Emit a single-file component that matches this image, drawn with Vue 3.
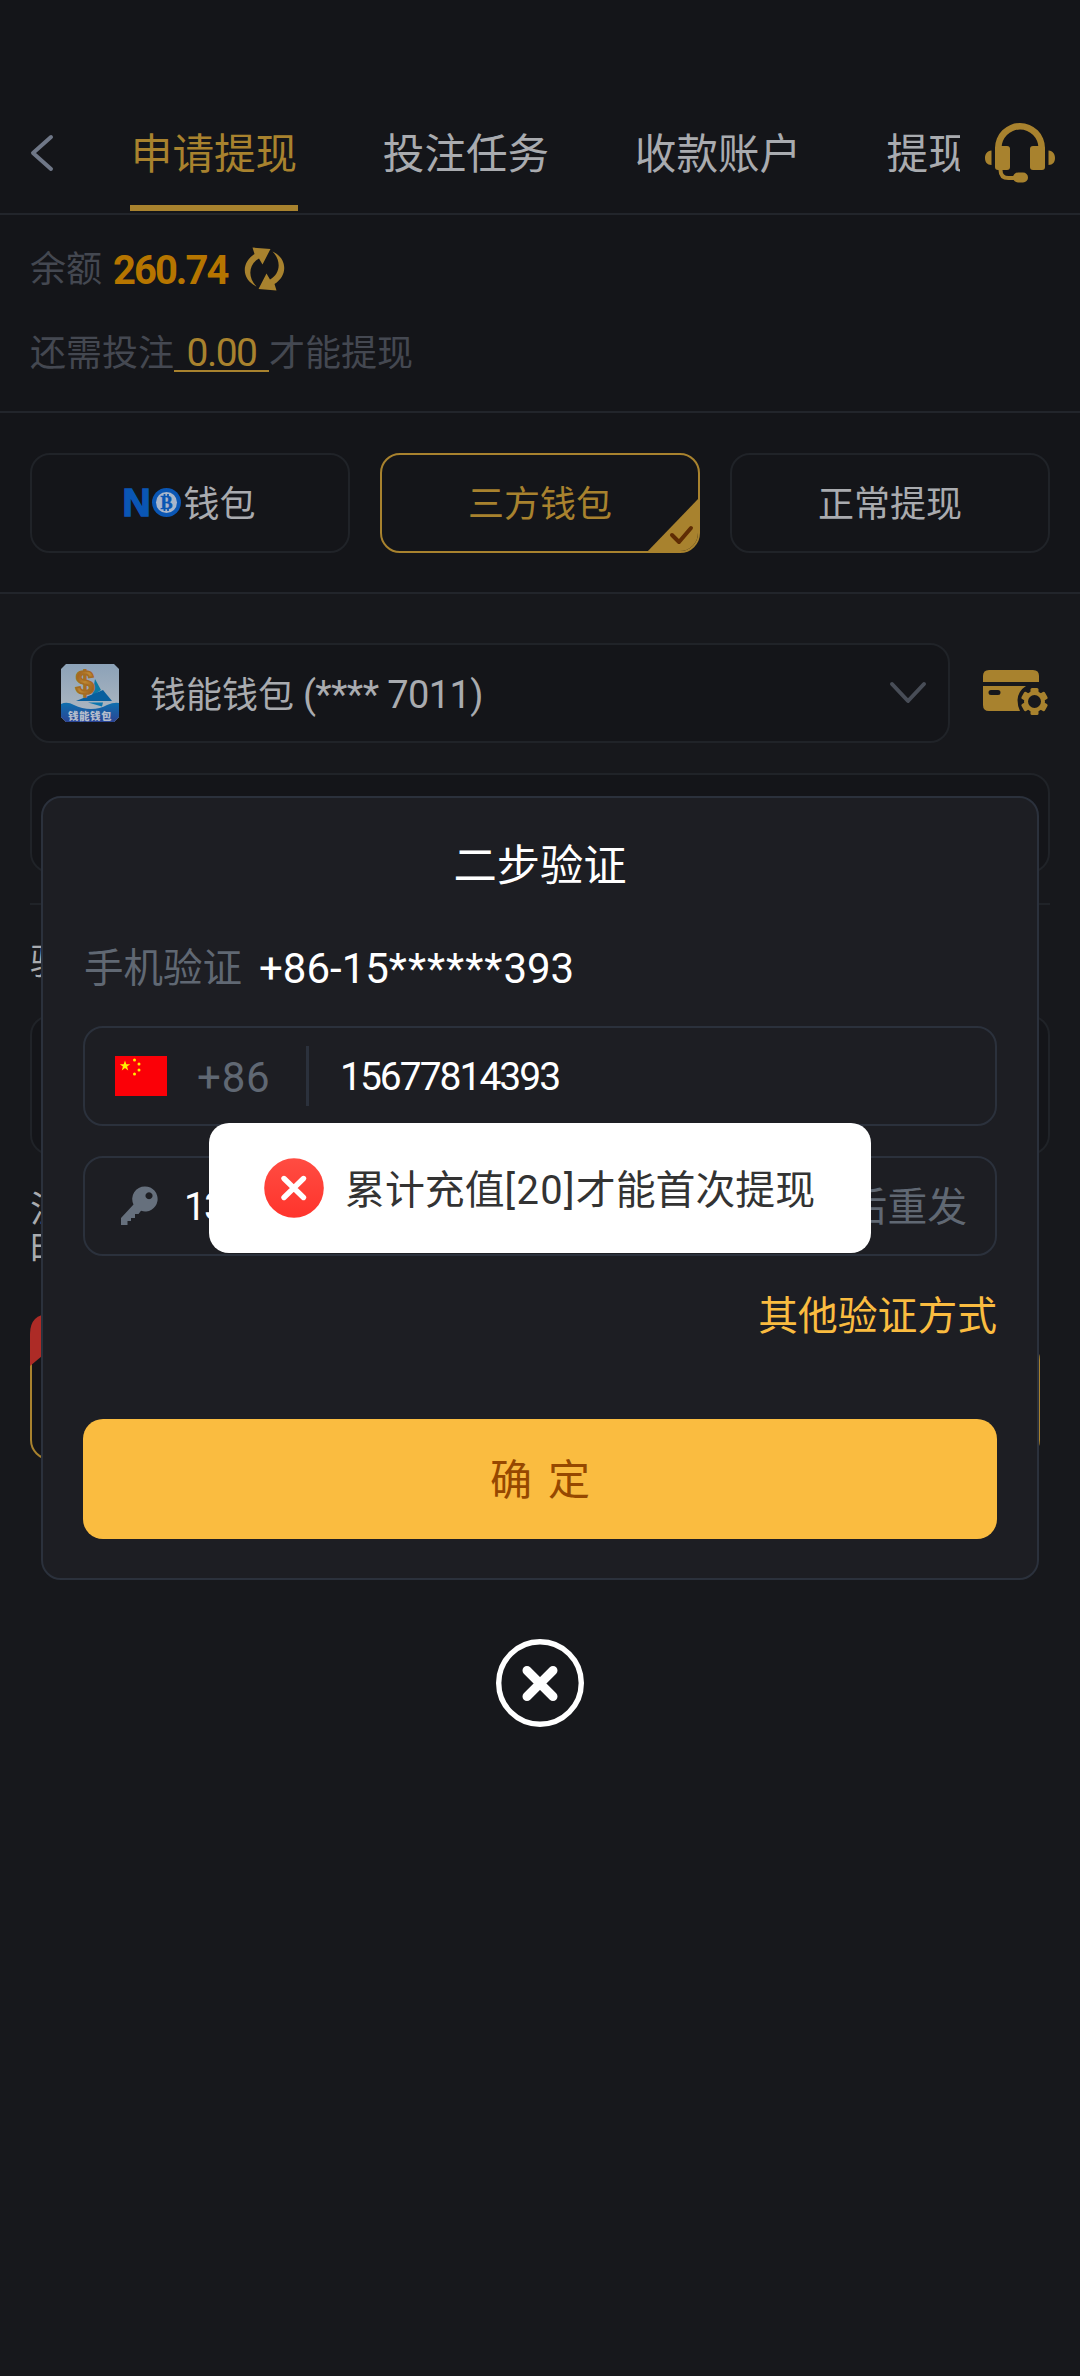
<script setup>
const tabs = ['申请提现', '投注任务', '收款账户', '提现']
</script>

<template>
  <div class="screen">
    <header class="nav">
      <svg class="back" width="26" height="40" viewBox="0 0 26 40"><path d="M22 4L4 20L22 36" fill="none" stroke="#6f7787" stroke-width="4" stroke-linecap="round" stroke-linejoin="round" /></svg>
      <nav class="tabs">
        <span v-for="(t, i) in tabs" :key="t" class="tab" :class="{ on: i === 0 }">{{ t }}</span>
      </nav>
      <svg class="headset" width="70" height="62" viewBox="0 0 70 62">
        <g fill="#a8822e">
          <path d="M10 30V26a25 25 0 0 1 50 0v4h-6.500V26a18.500 18.500 0 0 0-37 0v4z" />
          <rect x="10" y="24" width="15" height="24" rx="3" />
          <rect x="45" y="24" width="15" height="24" rx="3" />
          <path d="M6.500 28.500v14.500C2 43 0 40 0 36s2-7 6.500-7.500zM63.500 28.500v14.500C68 43 70 40 70 36s-2-7-6.500-7.500z" />
          <rect x="28" y="50.500" width="15" height="10" rx="5" />
        </g>
        <path d="M15.500 46v2q0 8 8 8h6" fill="none" stroke="#a8822e" stroke-width="4" />
      </svg>
    </header>

    <section class="balance">
      <div class="row">
        <span>余额</span><b class="amount">260.74</b>
        <svg class="refresh" width="42" height="44" viewBox="0 0 42 44" fill="#a8822e">
          <path id="arc" d="M8.500 0.500L26.500 2L18.500 17.500L15 11.500C5 17 3 30 12.500 39.500C-2 33-3.500 16 10.500 7z" />
          <path d="M32.500 43.500L14.500 42L22.500 26.500L26 32.500C36 27 38 14 28.500 4.500C43 11 44.500 28 30.500 37z" />
        </svg>
      </div>
      <div class="row">
        <span>还需投注</span><span class="need">0.00</span><span>才能提现</span>
      </div>
    </section>

    <section class="methods">
      <div class="method">
        <svg class="no-logo" width="58" height="30" viewBox="0 0 58 30">
          <text x="-1.500" y="28.300" class="no-n">N</text>
          <circle cx="42.500" cy="14.500" r="14.500" fill="#0a56b4" />
          <circle cx="42.500" cy="14.500" r="10.500" fill="#a9b6cb" />
          <text x="42.500" y="20.500" text-anchor="middle" class="no-b">B</text>
          <path d="M40.500 6v3M44 6v3M40.500 20v3M44 20v3" stroke="#0a56b4" stroke-width="1.800" />
        </svg>
        <span>钱包</span>
      </div>
      <div class="method active">
        <span>三方钱包</span>
        <svg class="corner" width="54" height="56" viewBox="0 0 54 56">
          <path d="M0 56L54 0V56z" fill="#a8822e" />
          <path d="M26 38l7 7l12-14" fill="none" stroke="#5f2c04" stroke-width="4" stroke-linecap="round" stroke-linejoin="round" />
        </svg>
      </div>
      <div class="method"><span>正常提现</span></div>
    </section>

    <section class="form">
      <div class="wallet">
        <div class="select">
          <svg class="logo" width="58" height="58" viewBox="0 0 58 58">
            <defs>
              <linearGradient id="sky" x1="0" y1="0" x2="0" y2="1"><stop offset="0" stop-color="#8ca2b8" /><stop offset="1" stop-color="#b2bac2" /></linearGradient>
              <linearGradient id="sea" x1="0" y1="0" x2="0" y2="1"><stop offset="0" stop-color="#0e6fae" /><stop offset="1" stop-color="#2b4494" /></linearGradient>
              <linearGradient id="gold" x1="0" y1="0" x2="1" y2="1"><stop offset="0" stop-color="#8a4a12" /><stop offset="0.5" stop-color="#bd8733" /><stop offset="1" stop-color="#8a4a12" /></linearGradient>
            </defs>
            <path d="M5 0h48l5 5v48l-5 5H5l-5-5V5z" fill="url(#sky)" />
            <path d="M34 15l6 11l-9 6z" fill="#0b7ba4" />
            <path d="M15 37L42 26L51 37z" fill="#085f9e" />
            <path d="M27 38.500h15l-1 4z" fill="#0b77b0" />
            <text x="24" y="30" text-anchor="middle" class="dollar">$</text>
            <path d="M0 40q6-3 13 1q8 4 17 4t16-4q7-3 12-2v14l-5 5H5l-5-5z" fill="url(#sea)" />
            <text x="29" y="56.200" text-anchor="middle" class="logo-name">钱能钱包</text>
          </svg>
          <span class="wallet-name">钱能钱包 <span class="tail">(**** 7011)</span></span>
          <svg class="down" width="38" height="26" viewBox="0 0 38 26"><path d="M3 4L19 21L35 4" fill="none" stroke="#484d57" stroke-width="4" stroke-linecap="round" stroke-linejoin="round" /></svg>
        </div>
        <svg class="card" width="66" height="46" viewBox="0 0 66 46">
          <path d="M0 12V6q0-6 6-6h44q6 0 6 6v6z" fill="#a8822e" />
          <path fill-rule="evenodd" d="M0 16h43q-8 5-8.500 14q0 6 2.500 11H6q-6 0-6-6zM8 20a2.500 2.500 0 0 0 0 5h7a2.500 2.500 0 0 0 0-5z" fill="#a8822e" />
          <g transform="translate(51.500 31.500)">
            <g fill="#a8822e">
              <rect v-for="a in [0, 60, 120]" :key="a" x="-4" y="-13.500" width="8" height="27" rx="1.500" :transform="`rotate(${a})`" />
              <circle r="10.500" />
            </g>
            <circle r="6.500" fill="#17181c" />
          </g>
        </svg>
      </div>
      <div class="field"></div>
      <div class="rule"></div>
      <div class="label">验</div>
      <div class="field tall"></div>
      <div class="note">注<br />时</div>
      <div class="option">
        <svg class="badge" width="60" height="52" viewBox="0 0 60 52"><path d="M0 52V20Q0 0 20 0H60L12 42z" fill="#ad2b26" /></svg>
      </div>
    </section>

    <div class="layer">
      <div class="modal">
        <h2>二步验证</h2>
        <div class="phone"><span>手机验证</span><span class="masked">+86-15<i>******</i>393</span></div>
        <div class="input">
          <svg class="flag" width="52" height="40" viewBox="0 0 52 40">
            <rect width="52" height="40" fill="#fb0007" />
            <g fill="#ffee00">
              <path d="M10 4.500l1.300 3.700h3.900l-3.100 2.400l1.100 3.800l-3.200-2.300l-3.200 2.300l1.100-3.800l-3.100-2.400h3.900z" />
              <circle cx="19.500" cy="4" r="1.500" /><circle cx="24" cy="8" r="1.500" /><circle cx="24" cy="14" r="1.500" /><circle cx="19.500" cy="18" r="1.500" />
            </g>
          </svg>
          <span class="code">+86</span><span class="bar"></span><span class="num">15677814393</span>
        </div>
        <div class="input second">
          <svg class="key" width="38" height="40" viewBox="0 0 38 40">
            <path fill-rule="evenodd" fill="#66707d" d="M24 0.500a12.500 12.500 0 1 1-4 24.300L17.500 28H14v4h-4v3H6.500v4H0V32L12.500 18.500A12.500 12.500 0 0 1 24 0.500zM28 6.300a3.500 3.500 0 1 0 .01 0z" />
          </svg>
          <span class="num">13</span><span class="resend">后重发</span>
        </div>
        <div class="other">其他验证方式</div>
        <div class="confirm"><span>确</span><span>定</span></div>
      </div>
      <svg class="close" width="88" height="88" viewBox="0 0 88 88" fill="none" stroke="#fff">
        <circle cx="44" cy="44" r="41.300" stroke-width="5.400" />
        <path d="M31 31.500L57 57.500M57 31.500L31 57.500" stroke-width="9" stroke-linecap="round" />
      </svg>
    </div>

    <div class="toast">
      <svg width="60" height="60" viewBox="0 0 60 60">
        <defs><linearGradient id="red" x1="0" y1="0" x2="0" y2="1"><stop offset="0" stop-color="#ff4c42" /><stop offset="1" stop-color="#ff342c" /></linearGradient></defs>
        <circle cx="30" cy="30" r="29.800" fill="url(#red)" />
        <path d="M20 20.500L39.500 39.500M39.500 20.500L20 39.500" stroke="#fff" stroke-width="5.400" stroke-linecap="round" />
      </svg>
      <span class="message">累计充值<em>[20]</em>才能首次提现</span>
    </div>
  </div>
</template>

<style>
body { background: #17181c; }
</style>

<style scoped>
* { box-sizing: border-box; }
.screen {
  position: relative; width: 1080px; height: 2376px; overflow: hidden;
  background: #17181c; color: #a9abaf;
  font-family: Roboto, "Noto Sans CJK SC", sans-serif; font-size: 36px; line-height: 1;
}
svg { display: block; flex: none; }
.nav {
  display: flex; align-items: flex-end; height: 215px; background: #141519; border-bottom: 2px solid #22252b;
}
.back { margin: 0 0 40px 29px; }
.tabs { display: flex; gap: 84px; width: 830px; height: 120px; margin-left: 75px; overflow: hidden; align-items: stretch; }
.tab { flex: none; height: 118px; line-height: 118px; padding-top: 3px; font-size: 41.6px; width: 168px; text-align: center; white-space: nowrap; }
.tab:last-child { width: 84px; }
.tab.on { color: #a8822e; border-bottom: 6px solid #a8822e; line-height: 118px; }
.headset { margin: 0 0 29px 25px; }
.balance {
  display: flex; flex-direction: column; gap: 24px; height: 198px; padding: 24px 30px 0;
  background: #141519; border-bottom: 2px solid #22252b; color: #444851;
}
.row { display: flex; align-items: center; height: 60px; }
.row > span:not(.need) { padding-top: 2px; }
.amount { margin-left: 11px; padding-top: 3px; color: #b67500; font-size: 40px; letter-spacing: -2px; font-weight: 700; }
.refresh { margin-left: 17px; }
.need {
  width: 95px; height: 38px; line-height: 38px; border-bottom: 2px solid #a8822e; color: #a8822e;
  font-size: 39px; letter-spacing: -1.500px; text-align: center;
}
.methods { display: flex; gap: 30px; height: 181px; padding: 40px 30px; background: #141519; border-bottom: 2px solid #22252b; }
.method {
  position: relative; flex: 1; height: 100px; display: flex; align-items: center; justify-content: center;
  border: 2px solid #202328; border-radius: 20px; overflow: hidden;
}
.method span { padding-top: 3px; }
.no-logo { margin-right: 1px; overflow: visible; }
.method.active { border-color: #a8822e; color: #a8822e; }
.corner { position: absolute; right: -2px; bottom: -2px; }
.no-n { font: 700 39px "Liberation Sans", sans-serif; fill: #0a56b4; stroke: #0a56b4; stroke-width: 1.500px; }
.no-b { font: 700 18px "Liberation Serif", serif; fill: #0a56b4; stroke: #0a56b4; stroke-width: 0.500px; }
.form { display: flex; flex-direction: column; padding: 49px 30px 0; }
.wallet { display: flex; align-items: center; }
.select { display: flex; align-items: center; width: 920px; height: 100px; padding: 0 21px 0 29px; border: 2px solid #202328; border-radius: 20px; background: #141519; }
.wallet-name { margin-left: 31px; padding-top: 4px; white-space: nowrap; }
.tail { font-size: 38px; letter-spacing: -0.600px; }
.down { margin-left: auto; }
.card { margin-left: 33px; }
.dollar { font: 700 34px "Liberation Sans", sans-serif; fill: url(#gold); stroke: #a56c22; stroke-width: 1.500px; }
.logo-name { font: 900 10.500px "Noto Sans CJK SC", sans-serif; letter-spacing: 0.500px; fill: #b4bdcc; }
.field { height: 100px; margin-top: 30px; border: 2px solid #202328; border-radius: 20px; background: #141519; }
.rule { height: 2px; margin-top: 30px; background: #202328; }
.label { margin-top: 38px; padding-top: 2px; height: 36px; }
.field.tall { height: 140px; margin-top: 36px; }
.note { margin-top: 33px; padding-top: 2px; line-height: 40px; height: 80px; }
.option { position: relative; width: 1010px; height: 120px; margin-top: 72px; border: 2px solid #a8822e; border-radius: 20px; background: #141519; }
.badge { position: absolute; left: -2px; top: -28px; }
.layer { position: absolute; inset: 0; padding-top: 796px; display: flex; flex-direction: column; align-items: center; }
.modal { width: 998px; height: 784px; padding: 0 40px; border: 2px solid #2b313c; border-radius: 20px; background: #1d1e23; color: #fff; }
h2 { margin: 47px 0 0; font-size: 43.300px; line-height: 44px; font-weight: 400; text-align: center; }
.phone { display: flex; align-items: center; height: 50px; margin-top: 53px; padding: 3px 0 0 1px; font-size: 39.500px; color: #606873; }
.masked { margin-left: 17px; font-size: 42px; color: #fff; white-space: nowrap; }
.masked i { font-style: normal; letter-spacing: 1px; }
.input { display: flex; align-items: center; height: 100px; margin-top: 34px; padding-left: 30px; border: 2px solid #2b313c; border-radius: 20px; }
.code { width: 74px; margin-left: 30px; padding-top: 3px; font-size: 42px; letter-spacing: 0.800px; color: #606873; }
.bar { width: 3px; height: 60px; margin-left: 35px; background: #2b313c; }
.num { margin-left: 31px; padding-top: 3px; font-size: 39px; letter-spacing: -2px; }
.second { margin-top: 30px; padding-left: 36px; }
.second .num { margin-left: 25px; }
.resend { margin: 0 28px 0 auto; padding-top: 3px; font-size: 39.800px; color: #606873; }
.other { margin-top: 41px; font-size: 39.800px; line-height: 40px; text-align: right; color: #fabc40; }
.confirm { display: flex; justify-content: center; align-items: center; gap: 16px; height: 120px; margin-top: 82px; padding-top: 4px; border-radius: 20px; background: #fabc40; color: #964800; font-size: 42px; }
.close { margin-top: 59px; }
.toast {
  position: absolute; left: 209px; top: 1123px; width: 662px; height: 130px; padding-left: 55px;
  display: flex; align-items: center; gap: 21px; border-radius: 20px; background: #fff; color: #333; font-size: 39.900px; white-space: nowrap;
}
.message { padding-top: 5px; }
.toast em { font-style: normal; letter-spacing: 1.300px; }
</style>
